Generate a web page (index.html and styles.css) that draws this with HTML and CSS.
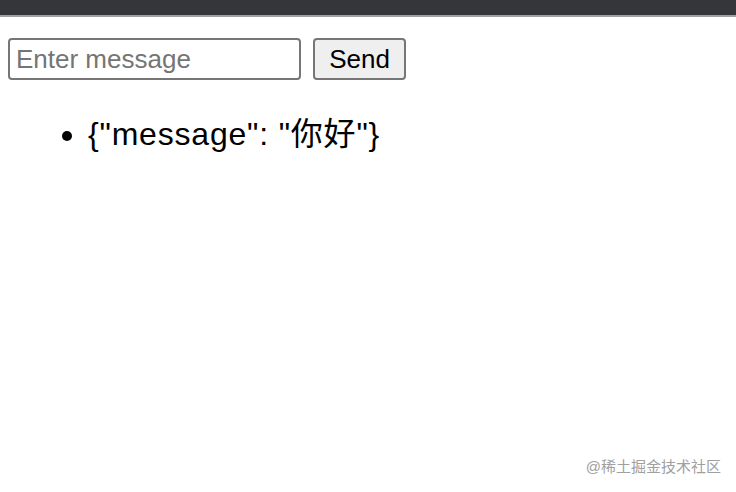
FILE: index.html
```html
<!DOCTYPE html>
<html lang="en">

<head>
  <meta charset="UTF-8">
  <meta name="viewport" content="width=device-width, initial-scale=1.0">
  <title>WebSocket Demo</title>
  <link rel="stylesheet" href="styles.css">
</head>

<body>
  <div class="top-bar"></div>

  <div class="page">
    <form id="message-form" class="message-form">
      <input type="text" id="message-input" placeholder="Enter message" />
      <button type="submit">Send</button>
    </form>

    <ul id="messages" class="messages">
      <li>{"message": "你好"}</li>
    </ul>
  </div>

  <div class="watermark">@稀土掘金技术社区</div>
</body>

</html>
```

FILE: styles.css
```css
html,
body {
  height: 100%;
}

body {
  font-family: "Liberation Sans", Arial, "Noto Sans CJK SC", sans-serif;
  background-color: #ffffff;
  color: #000000;
  margin: 0;
  padding: 0;
  display: flex;
  flex-direction: column;
}

.top-bar {
  height: 15px;
  background-color: #35363a;
  border-bottom: 2px solid #a0a0a2;
}

.page {
  flex: 1;
  padding: 21px 8px 0;
}

.message-form {
  display: flex;
  gap: 12px;
}

.message-form input {
  width: 293px;
  height: 42px;
  box-sizing: border-box;
  padding: 0 6px;
  border: 2px solid #767676;
  border-radius: 4px;
  font-family: inherit;
  font-size: 26px;
  color: #000;
}

.message-form input::placeholder {
  color: #757575;
}

.message-form button {
  width: 93px;
  height: 42px;
  box-sizing: border-box;
  border: 2px solid #767676;
  border-radius: 4px;
  background-color: #efefef;
  font-family: inherit;
  font-size: 26px;
  color: #000;
  padding: 0;
}

.messages {
  margin: 36px 0 0;
  padding-left: 80px;
  font-size: 32px;
  line-height: 37px;
  letter-spacing: 0.8px;
}

.watermark {
  position: absolute;
  right: 15px;
  bottom: 16px;
  font-size: 15px;
  color: #a0a0a0;
}
```
